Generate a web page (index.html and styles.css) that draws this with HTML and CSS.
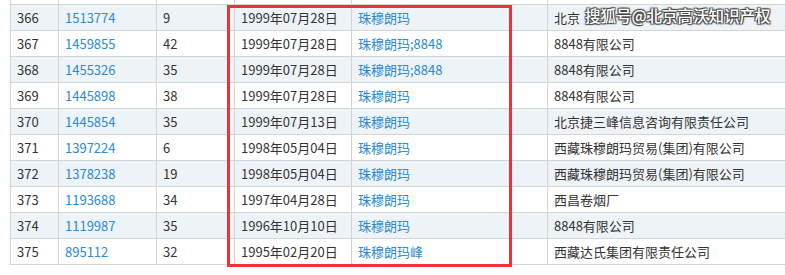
FILE: index.html
```html
<!DOCTYPE html>
<html>
<head>
<meta charset="utf-8">
<link rel="stylesheet" href="styles.css">
</head>
<body>
<div class="wrap">
  <table class="grid">
    <colgroup>
      <col class="c1"><col class="c2"><col class="c3"><col class="c4"><col class="c5"><col class="c6">
    </colgroup>
    <tr class="even"><td></td><td></td><td></td><td></td><td></td><td></td></tr>
    <tr class="odd"><td>366</td><td class="lk">1513774</td><td>9</td><td>1999年07月28日</td><td class="lk">珠穆朗玛</td><td>北京</td></tr>
    <tr class="even"><td>367</td><td class="lk">1459855</td><td>42</td><td>1999年07月28日</td><td class="lk">珠穆朗玛;8848</td><td>8848有限公司</td></tr>
    <tr class="odd"><td>368</td><td class="lk">1455326</td><td>35</td><td>1999年07月28日</td><td class="lk">珠穆朗玛;8848</td><td>8848有限公司</td></tr>
    <tr class="even"><td>369</td><td class="lk">1445898</td><td>38</td><td>1999年07月28日</td><td class="lk">珠穆朗玛</td><td>8848有限公司</td></tr>
    <tr class="odd"><td>370</td><td class="lk">1445854</td><td>35</td><td>1999年07月13日</td><td class="lk">珠穆朗玛</td><td>北京捷三峰信息咨询有限责任公司</td></tr>
    <tr class="even"><td>371</td><td class="lk">1397224</td><td>6</td><td>1998年05月04日</td><td class="lk">珠穆朗玛</td><td>西藏珠穆朗玛贸易(集团)有限公司</td></tr>
    <tr class="odd"><td>372</td><td class="lk">1378238</td><td>19</td><td>1998年05月04日</td><td class="lk">珠穆朗玛</td><td>西藏珠穆朗玛贸易(集团)有限公司</td></tr>
    <tr class="even"><td>373</td><td class="lk">1193688</td><td>34</td><td>1997年04月28日</td><td class="lk">珠穆朗玛</td><td>西昌卷烟厂</td></tr>
    <tr class="odd"><td>374</td><td class="lk">1119987</td><td>35</td><td>1996年10月10日</td><td class="lk">珠穆朗玛</td><td>8848有限公司</td></tr>
    <tr class="even"><td>375</td><td class="lk">895112</td><td>32</td><td>1995年02月20日</td><td class="lk">珠穆朗玛峰</td><td>西藏达氏集团有限责任公司</td></tr>
  </table>
  <div class="highlight"></div>
  <div class="watermark">搜狐号@北京高沃知识产权</div>
</div>
</body>
</html>
```
FILE: styles.css
```css
html, body {
  margin: 0;
  padding: 0;
  background: #ffffff;
}
.wrap {
  position: relative;
  width: 785px;
  height: 275px;
  overflow: hidden;
  padding-left: 10px;
  box-sizing: border-box;
}
.grid {
  border-collapse: collapse;
  table-layout: fixed;
  width: 840px;
  margin-top: -21px;
  font-family: "Noto Sans CJK SC", "Noto Sans", sans-serif;
  font-size: 13px;
  color: #333333;
}
.c1 { width: 48px; }
.c2 { width: 98px; }
.c3 { width: 78px; }
.c4 { width: 117px; }
.c5 { width: 196px; }
.c6 { width: 303px; }
.grid td {
  border: 1px solid #d4d4d4;
  height: 25px;
  padding: 0 6px;
  line-height: 25px;
  white-space: nowrap;
  overflow: hidden;
  box-sizing: border-box;
}
.grid tr.odd td { background: #eef3f8; }
.grid tr.even td { background: #ffffff; }
.grid td.lk { color: #2a8ad4; }
.highlight {
  position: absolute;
  left: 227px;
  top: 5px;
  width: 285px;
  height: 262px;
  border: 3px solid #ee3338;
  box-sizing: border-box;
}
.watermark {
  position: absolute;
  left: 585px;
  top: 5px;
  font-family: "Noto Sans CJK SC", sans-serif;
  font-size: 15.5px;
  line-height: 20px;
  font-weight: 500;
  color: #ffffff;
  text-shadow: 1px 1px 1px #444, -1px -1px 1px #444, 1px -1px 1px #444, -1px 1px 1px #444;
}
```
